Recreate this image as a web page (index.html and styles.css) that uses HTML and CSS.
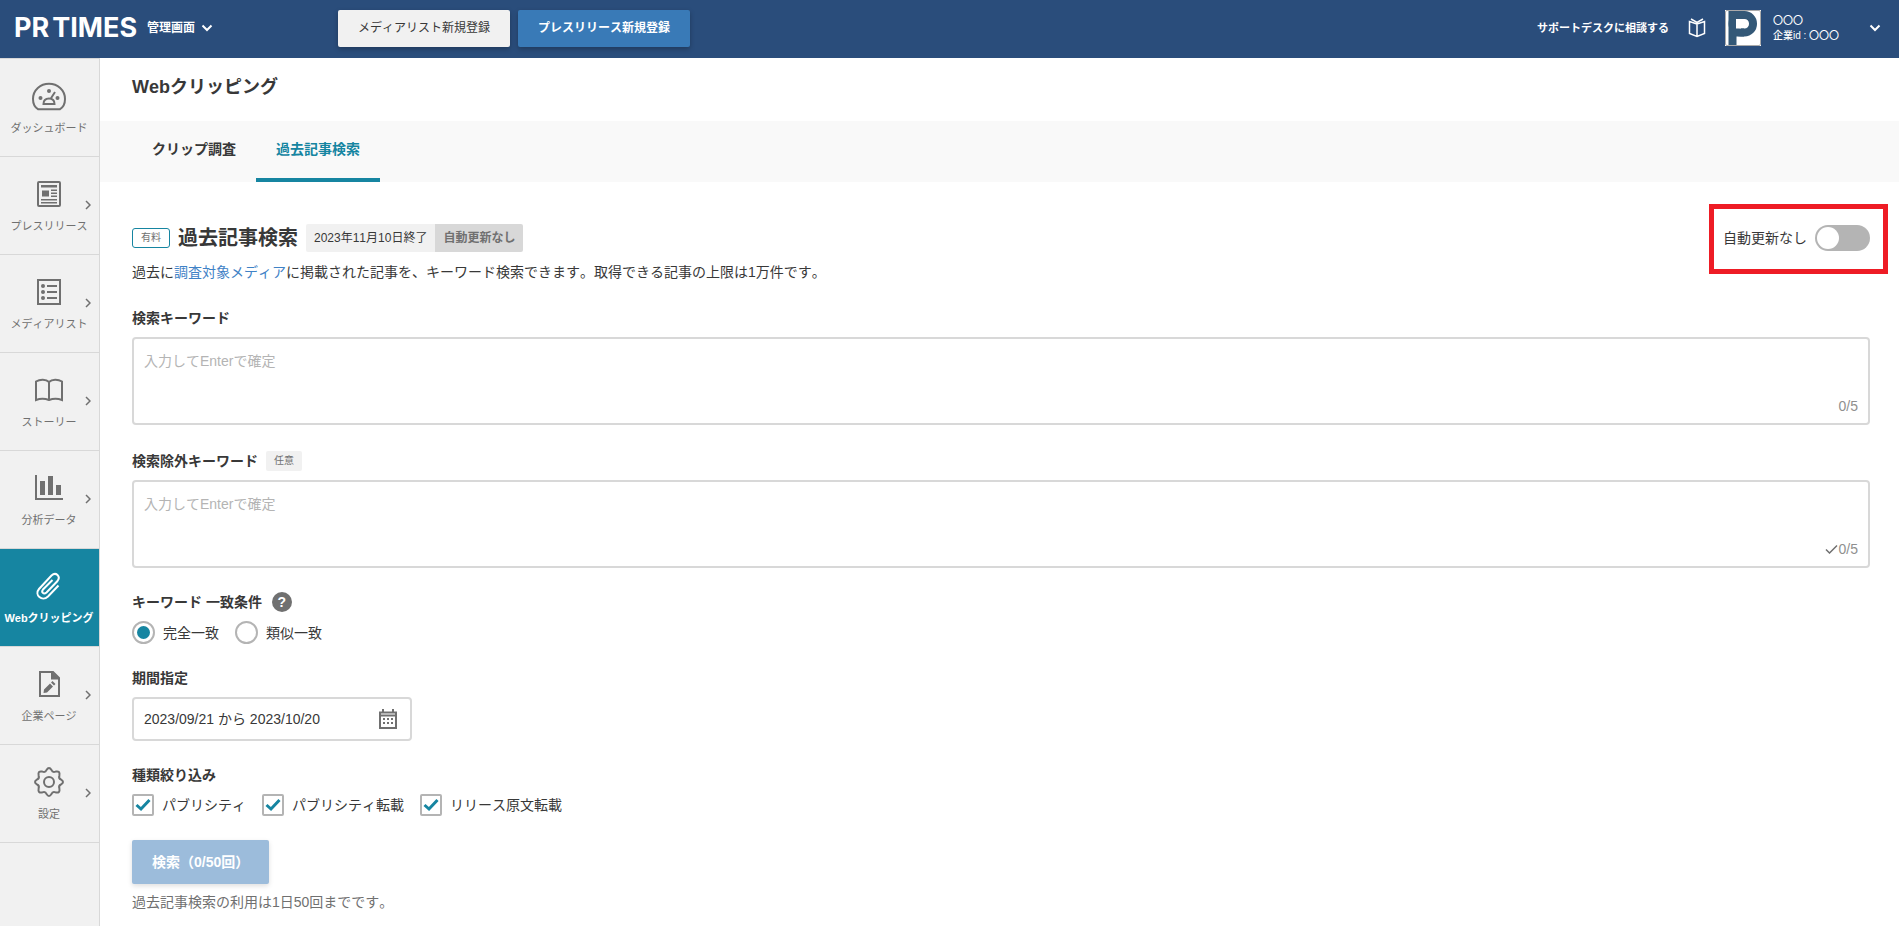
FILE: index.html
```html
<!DOCTYPE html>
<html lang="ja">
<head>
<meta charset="utf-8">
<title>Webクリッピング | PR TIMES 管理画面</title>
<meta name="viewport" content="width=device-width, initial-scale=1">
<link rel="stylesheet" href="styles.css">
</head>
<body>
<header class="header">
  <div class="header-brand">
    <a class="logo" href="#" aria-label="PR TIMES"><span>PR</span><span>TIMES</span></a>
    <button class="menu-button" type="button">管理画面
      <svg class="chevron-down" viewBox="0 0 12 8" aria-hidden="true"><path d="M1.5 1.5 6 6l4.500-4.500"/></svg>
    </button>
  </div>
  <div class="header-actions">
    <button class="header-button" type="button">メディアリスト新規登録</button>
    <button class="header-button header-button-primary" type="button">プレスリリース新規登録</button>
  </div>
  <div class="header-account">
    <a class="support-link" href="#">サポートデスクに相談する</a>
    <a class="guide-link" href="#" aria-label="ガイド">
      <svg viewBox="0 0 18 20" aria-hidden="true"><path d="M9 6 1.500 3.500v12L9 18.500l7.500-3v-12zM9 6v12.500M3 1 9 4.500l6-3.500"/></svg>
    </a>
    <button class="account-button" type="button">
      <svg class="avatar" viewBox="0 0 36 36" aria-hidden="true">
        <rect width="36" height="36" fill="#fff"/>
        <rect x="7.500" y="5" width="20.500" height="17.500" rx="8.500" fill="none" stroke="#335877" stroke-width="8"/>
        <rect x="3.500" y="1" width="8" height="34.500" fill="#335877"/>
        <rect x="11" y="1" width="8" height="8" fill="#335877"/>
        <rect x="11" y="18.500" width="8" height="8" fill="#335877"/>
        <rect x="11" y="9" width="5" height="9.500" fill="#fff"/>
        <rect x=".5" y=".5" width="35" height="35" rx="1.500" fill="none" stroke="#aaa"/>
      </svg>
      <span class="account-text"><span>〇〇〇</span><span>企業id : 〇〇〇</span></span>
      <svg class="chevron-down" viewBox="0 0 12 8" aria-hidden="true"><path d="M1.500 1.500 6 6l4.500-4.500"/></svg>
    </button>
  </div>
</header>
<div class="layout">
  <nav class="sidebar">
    <a class="nav-item" href="#">
      <svg class="nav-icon" viewBox="0 0 36 30" aria-hidden="true"><path class="line" d="M7 28.200C3.500 26 2 22 2 18 2 9 9.500 2.800 18 2.800S34 9 34 18c0 4-1.500 8-5 10.200zM12.500 23h11c0-3.500-2-5.500-5.500-5.500s-5.500 2-5.500 5.500zM19.500 18l4.500-7"/><circle cx="18" cy="10" r="2"/><circle cx="9.500" cy="17" r="2"/><circle cx="26.500" cy="17" r="2"/></svg>
      <span>ダッシュボード</span>
    </a>
    <a class="nav-item" href="#">
      <svg class="nav-icon" viewBox="0 0 36 30" aria-hidden="true"><rect class="line" x="7" y="3" width="22" height="24" rx="1"/><path d="M10 6h16v2.500H10zM11 11.500h7v6h-7zM20 10.500h6V12h-6zM20 13.500h6V15h-6zM20 16.500h6V18h-6zM10 20h16v1.500H10zM10 23h16v1.500H10z"/></svg>
      <span>プレスリリース</span>
      <svg class="nav-arrow" viewBox="0 0 6 10" aria-hidden="true"><path d="M1 1l4 4-4 4"/></svg>
    </a>
    <a class="nav-item" href="#">
      <svg class="nav-icon" viewBox="0 0 36 30" aria-hidden="true"><path class="line" d="M7 3h22v24H7zM16 9h10M16 15h10M16 21h10"/><circle cx="12" cy="9" r="2"/><circle cx="12" cy="15" r="2"/><circle cx="12" cy="21" r="2"/></svg>
      <span>メディアリスト</span>
      <svg class="nav-arrow" viewBox="0 0 6 10" aria-hidden="true"><path d="M1 1l4 4-4 4"/></svg>
    </a>
    <a class="nav-item" href="#">
      <svg class="nav-icon" viewBox="0 0 36 30" aria-hidden="true"><path class="line" d="M18 7v18M18 7c-3-3-9-3-13-.5V25c4-1.500 9-1.500 13 0 4-1.500 9-1.500 13 0V6.500C27 4 21 4 18 7z"/></svg>
      <span>ストーリー</span>
      <svg class="nav-arrow" viewBox="0 0 6 10" aria-hidden="true"><path d="M1 1l4 4-4 4"/></svg>
    </a>
    <a class="nav-item" href="#">
      <svg class="nav-icon" viewBox="0 0 36 30" aria-hidden="true"><path class="line" d="M5 2v24h27"/><path d="M9 8h5v14H9zM17 3h5v19h-5zM25 12h5v10h-5z"/></svg>
      <span>分析データ</span>
      <svg class="nav-arrow" viewBox="0 0 6 10" aria-hidden="true"><path d="M1 1l4 4-4 4"/></svg>
    </a>
    <a class="nav-item nav-item-active" href="#" aria-current="page">
      <svg class="nav-icon" viewBox="0 0 36 30" aria-hidden="true"><path class="line" d="M27.500 14.500 17 25.500c-6 5.500-14-1.500-9-7.500L20.500 4.500c4.500-4 9.500 1 6 5.500L15.500 21.500c-3 2.500-5.500-.5-3.500-3L21.500 9"/></svg>
      <span>Webクリッピング</span>
    </a>
    <a class="nav-item" href="#">
      <svg class="nav-icon" viewBox="0 0 36 30" aria-hidden="true"><path class="line" d="M9 3h13l6 6v18H9z"/><path d="M20 2l9 8.500h-9zM13 20.500l6-6 3 3-6 6-3.500.5zM20 13.500l1.500-1.500 3 3-1.500 1.500z"/></svg>
      <span>企業ページ</span>
      <svg class="nav-arrow" viewBox="0 0 6 10" aria-hidden="true"><path d="M1 1l4 4-4 4"/></svg>
    </a>
    <a class="nav-item" href="#">
      <svg class="nav-icon" viewBox="0 0 36 30" aria-hidden="true"><circle class="line" cx="18" cy="15" r="5"/><path class="line" d="M15.500 3Q18-1 20.500 3C21.200 5 22.300 5.400 24.700 4.600Q29.300 3.700 28.400 8.300C27.600 10.700 28 11.800 30 12.500Q34 15 30 17.500C28 18.200 27.600 19.300 28.400 21.700Q29.300 26.300 24.700 25.400C22.300 24.600 21.200 25 20.500 27Q18 31 15.500 27C14.800 25 13.700 24.600 11.300 25.400Q6.700 26.300 7.600 21.700C8.400 19.300 8 18.200 6 17.500Q2 15 6 12.500C8 11.800 8.400 10.700 7.600 8.300Q6.700 3.700 11.300 4.600C13.700 5.400 14.800 5 15.500 3z"/></svg>
      <span>設定</span>
      <svg class="nav-arrow" viewBox="0 0 6 10" aria-hidden="true"><path d="M1 1l4 4-4 4"/></svg>
    </a>
  </nav>
  <main class="main">
    <h1 class="page-title">Webクリッピング</h1>
    <nav class="tabs">
      <a class="tab" href="#">クリップ調査</a>
      <a class="tab tab-active" href="#" aria-current="page">過去記事検索</a>
    </nav>
    <form class="content">
      <div class="section-head">
        <span class="badge-paid">有料</span>
        <h2 class="section-title">過去記事検索</h2>
        <div class="plan-status"><span class="plan-date">2023年11月10日終了</span><strong class="plan-renew">自動更新なし</strong></div>
        <label class="renew"><span>自動更新なし</span><input class="toggle" type="checkbox" role="switch"></label>
      </div>
      <p class="lead">過去に<a href="#">調査対象メディア</a>に掲載された記事を、キーワード検索できます。取得できる記事の上限は1万件です。</p>

      <div class="field">
        <div class="field-label"><label for="include">検索キーワード</label></div>
        <div class="keyword-box">
          <textarea id="include" placeholder="入力してEnterで確定"></textarea>
          <span class="counter">0/5</span>
        </div>
      </div>

      <div class="field">
        <div class="field-label"><label for="exclude">検索除外キーワード</label><span class="badge-optional">任意</span></div>
        <div class="keyword-box">
          <textarea id="exclude" placeholder="入力してEnterで確定"></textarea>
          <span class="counter"><svg viewBox="0 0 14 10" aria-hidden="true"><path d="M1 5.500 4.500 9 12 1.500"/></svg>0/5</span>
        </div>
      </div>

      <div class="field field-choices" role="radiogroup" aria-labelledby="match-label">
        <div class="field-label"><span id="match-label">キーワード 一致条件</span><button class="help" type="button" aria-label="ヘルプ">?</button></div>
        <div class="choices">
          <label class="choice"><input class="radio" type="radio" name="match" checked>完全一致</label>
          <label class="choice"><input class="radio" type="radio" name="match">類似一致</label>
        </div>
      </div>

      <div class="field">
        <div class="field-label"><label for="period">期間指定</label></div>
        <div class="date-box">
          <input id="period" type="text" value="2023/09/21 から 2023/10/20">
          <svg viewBox="0 0 18 20" aria-hidden="true"><path class="frame" d="M1 3.500h16V19H1zM1 6.500h16"/><path d="M3 0h2v3H3zM13 0h2v3h-2zM4 9h2v2H4zM8 9h2v2H8zM12 9h2v2h-2zM4 13h2v2H4zM8 13h2v2H8zM12 13h2v2h-2z"/></svg>
        </div>
      </div>

      <div class="field field-choices" role="group" aria-labelledby="kind-label">
        <div class="field-label"><span id="kind-label">種類絞り込み</span></div>
        <div class="choices">
          <label class="choice"><span class="check"><input type="checkbox" checked><svg viewBox="0 0 22 22" aria-hidden="true"><path d="M4.500 11 9 15l8.500-9"/></svg></span>パブリシティ</label>
          <label class="choice"><span class="check"><input type="checkbox" checked><svg viewBox="0 0 22 22" aria-hidden="true"><path d="M4.500 11 9 15l8.500-9"/></svg></span>パブリシティ転載</label>
          <label class="choice"><span class="check"><input type="checkbox" checked><svg viewBox="0 0 22 22" aria-hidden="true"><path d="M4.500 11 9 15l8.500-9"/></svg></span>リリース原文転載</label>
        </div>
      </div>

      <button class="submit" type="submit" disabled>検索（0/50回）</button>
      <p class="note">過去記事検索の利用は1日50回までです。</p>
    </form>
  </main>
</div>
</body>
</html>
```

FILE: styles.css
```css
* {
  box-sizing: border-box;
}

body {
  margin: 0;
  min-height: 100vh;
  display: flex;
  flex-direction: column;
  color: #383838;
  background: #fff;
  font: 14px/20px "Liberation Sans", "Noto Sans CJK JP", sans-serif;
  font-kerning: none;
}

button,
input,
textarea {
  font: inherit;
  font-kerning: none;
  color: inherit;
}

button {
  padding: 0;
  border: 0;
  background: none;
  cursor: pointer;
}

a {
  color: inherit;
  text-decoration: none;
}

h1,
h2,
p {
  margin: 0;
}

svg {
  display: block;
  flex: none;
}

/* Header */
.header {
  display: flex;
  align-items: center;
  height: 58px;
  padding: 0 18px 2px 14px;
  color: #fff;
  background: #2a4d7b;
  font-size: 12px;
  font-weight: bold;
}

.header-brand {
  display: flex;
  align-items: center;
  gap: 10px;
  width: 324px;
}

.logo {
  display: flex;
  gap: 3px;
  font: 700 27px/32px Inter, sans-serif;
}

.menu-button {
  display: flex;
  align-items: center;
  gap: 6px;
}

.chevron-down {
  width: 12px;
  height: 8px;
  fill: none;
  stroke: #fff;
  stroke-width: 2;
}

.header-actions {
  display: flex;
  gap: 8px;
}

.header-button {
  width: 172px;
  height: 37px;
  border-radius: 2px;
  color: #383838;
  background: #f1f1f1;
  box-shadow: 0 2px 5px rgba(0, 0, 0, .26);
  font-weight: normal;
}

.header-button-primary {
  color: #fff;
  background: #397ab7;
  font-weight: bold;
}

.header-account {
  display: flex;
  align-items: center;
  margin-left: auto;
}

.support-link {
  font-size: 11px;
}

.guide-link {
  margin: 0 19px;
}

.guide-link svg {
  width: 18px;
  height: 20px;
  fill: none;
  stroke: #fff;
  stroke-width: 1.5;
}

.account-button {
  display: flex;
  align-items: center;
  gap: 12px;
  width: 156px;
}

.avatar {
  width: 36px;
  height: 36px;
}

.account-text {
  display: flex;
  flex-direction: column;
  flex: 1;
  font-size: 10px;
  font-weight: 500;
  line-height: 15px;
  text-align: left;
}

/* Sidebar */
.layout {
  display: flex;
  flex: 1;
}

.sidebar {
  flex: none;
  width: 100px;
  border-top: 1px solid #d8d8d8;
  border-right: 1px solid #d8d8d8;
  background: #f1f1f1;
}

.nav-item {
  position: relative;
  display: flex;
  flex-direction: column;
  align-items: center;
  gap: 7px;
  height: 98px;
  padding: 22px 1px 0 0;
  border-bottom: 1px solid #d8d8d8;
  color: #707070;
  font-size: 11px;
  white-space: nowrap;
}

.nav-item-active {
  color: #fff;
  background: #1685a1;
  font-weight: bold;
}

.nav-icon {
  width: 36px;
  height: 30px;
  overflow: visible;
  fill: currentColor;
}

.nav-icon .line {
  fill: none;
  stroke: currentColor;
  stroke-width: 2;
}

.nav-arrow {
  position: absolute;
  top: 43px;
  right: 8px;
  width: 6px;
  height: 10px;
  fill: none;
  stroke: currentColor;
  stroke-width: 1.5;
}

/* Main */
.main {
  flex: 1;
  min-width: 0;
}

.page-title {
  padding: 15px 32px 20px;
  font-size: 18px;
  line-height: 28px;
}

.tabs {
  display: flex;
  padding: 0 32px;
  background: #f9f9f9;
}

.tab {
  height: 61px;
  padding: 18px 20px 0;
  font-weight: bold;
}

.tab-active {
  border-bottom: 4px solid #1685a1;
  color: #1685a1;
}

.content {
  padding: 42px 29px 12px 32px;
}

.section-head {
  display: flex;
  align-items: center;
  gap: 8px;
}

.badge-paid {
  border: 1px solid #1685a1;
  border-radius: 3px;
  padding: 0 8px;
  color: #707070;
  font-size: 10px;
  line-height: 18px;
}

.section-title {
  font-size: 20px;
  line-height: 28px;
}

.plan-status {
  display: flex;
  border-radius: 2px;
  overflow: hidden;
  font-size: 12px;
  line-height: 28px;
}

.plan-date {
  padding: 0 8px;
  background: #f1f1f1;
}

.plan-renew {
  padding: 0 8px;
  color: #707070;
  background: #d8d8d8;
}

.renew {
  position: relative;
  display: flex;
  align-items: center;
  gap: 8px;
  margin-left: auto;
}

.renew::after {
  content: "";
  position: absolute;
  inset: -21px -18px -23px -14px;
  border: 5px solid #ee1c25;
  pointer-events: none;
}

.toggle {
  appearance: none;
  display: flex;
  width: 55px;
  height: 26px;
  margin: 0;
  padding: 2px;
  border-radius: 13px;
  background: #b4b4b4;
}

.toggle::before {
  content: "";
  width: 22px;
  height: 22px;
  border-radius: 50%;
  background: #fff;
}

.lead {
  margin-top: 10px;
}

.lead a {
  color: #3f82c6;
}

.field {
  margin-top: 26px;
}

.field-label {
  display: flex;
  align-items: center;
  gap: 8px;
  margin-bottom: 9px;
  font-weight: bold;
}

.field-choices .field-label {
  gap: 10px;
}

.badge-optional {
  padding: 0 8px;
  border-radius: 2px;
  color: #707070;
  background: #f1f1f1;
  font-size: 10px;
  font-weight: normal;
}

.keyword-box {
  position: relative;
}

.keyword-box textarea {
  display: block;
  width: 100%;
  height: 88px;
  padding: 12px 10px;
  border: 2px solid #d8d8d8;
  border-radius: 4px;
  outline: 0;
  resize: none;
  background: #fff;
}

.keyword-box textarea::placeholder {
  color: #b4b4b4;
}

.counter {
  position: absolute;
  right: 12px;
  bottom: 9px;
  display: flex;
  align-items: center;
  color: #8f8f8f;
}

.counter svg {
  width: 14px;
  height: 10px;
  fill: none;
  stroke: #707070;
  stroke-width: 1.5;
}

.help {
  width: 20px;
  height: 20px;
  border-radius: 50%;
  color: #fff;
  background: #707070;
  font-weight: bold;
}

.field-choices,
.field-choices + .field {
  margin-top: 24px;
}

.choices {
  display: flex;
  gap: 16px;
}

.choice {
  display: flex;
  align-items: center;
  gap: 8px;
}

.radio {
  appearance: none;
  display: flex;
  width: 23px;
  height: 23px;
  margin: 0;
  padding: 3px;
  border: 2px solid #b4b4b4;
  border-radius: 50%;
  background: #fff;
}

.radio:checked::before {
  content: "";
  flex: 1;
  border-radius: 50%;
  background: #1685a1;
}

.check {
  position: relative;
  width: 22px;
  height: 22px;
}

.check input {
  appearance: none;
  display: block;
  width: 22px;
  height: 22px;
  margin: 0;
  border: 2px solid #b4b4b4;
  border-radius: 2px;
  background: #fff;
}

.check svg {
  position: absolute;
  inset: 0;
  fill: none;
  stroke: #1685a1;
  stroke-width: 3;
  pointer-events: none;
}

.date-box {
  display: flex;
  align-items: center;
  width: 280px;
  height: 44px;
  padding: 0 13px 0 10px;
  border: 2px solid #d8d8d8;
  border-radius: 4px;
}

.date-box input {
  flex: 1;
  min-width: 0;
  height: 36px;
  padding: 0 0 2px;
  border: 0;
  outline: 0;
  background: none;
}

.date-box svg {
  width: 18px;
  height: 20px;
  fill: #707070;
}

.date-box .frame {
  fill: none;
  stroke: #707070;
  stroke-width: 2;
}

.submit {
  display: block;
  height: 44px;
  margin-top: 24px;
  padding: 0 20px;
  border-radius: 2px;
  color: #fff;
  background: #9cbcdb;
  box-shadow: 0 2px 5px rgba(0, 0, 0, .13);
  font-weight: bold;
}

.note {
  margin-top: 8px;
  color: #707070;
}
```
